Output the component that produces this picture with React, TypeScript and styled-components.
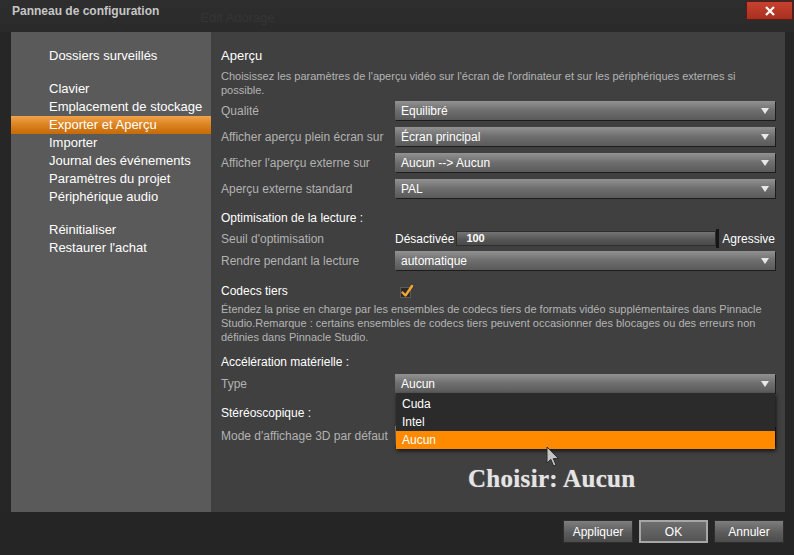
import { FC } from "react";
import styled, { createGlobalStyle } from "styled-components";

const GlobalStyle = createGlobalStyle`
  html, body {
    margin: 0;
    padding: 0;
    background: #262626;
  }
  body {
    font-family: "Liberation Sans", Arial, sans-serif;
  }
`;

const menuGroups: string[][] = [
    ['Dossiers surveillés'],
    ['Clavier', 'Emplacement de stockage', 'Exporter et Aperçu', 'Importer', 'Journal des événements', 'Paramètres du projet', 'Périphérique audio'],
    ['Réinitialiser', "Restaurer l'achat"],
];

const previewRows = [
    { label: 'Qualité', value: 'Equilibré' },
    { label: 'Afficher aperçu plein écran sur', value: 'Écran principal' },
    { label: "Afficher l'aperçu externe sur", value: 'Aucun --> Aucun' },
    { label: 'Aperçu externe standard', value: 'PAL' },
];

const accelOptions = ['Cuda', 'Intel', 'Aucun'];

const Arrow: FC = () => (
    <SArrow width="8" height="6" viewBox="0 0 8 6">
        <path d="M0 0 H8 L4 6 Z" fill="#e8e8e8"/>
    </SArrow>
);

const Select: FC<{ value?: string }> = ({ value }) => (
    <SSelect>
        <span>{ value }</span>
        <Arrow/>
    </SSelect>
);

const CheckBox: FC = () => (
    <svg width="15" height="15" viewBox="0 0 15 15">
        <rect x="1.5" y="3.5" width="10" height="10" fill="#2a2a2a" stroke="#5a5a5a"/>
        <path d="M3.5 8.5 L6.5 11.5 L13 2" fill="none" stroke="#f7a531" strokeWidth="2.4" strokeLinecap="round" strokeLinejoin="round"/>
    </svg>
);

export default function App() {
    return (
        <SWindow>
            <GlobalStyle/>
            <STitleBar>
                <STitle>Panneau de configuration</STitle>
                <SGhost>Edit Adorage</SGhost>
                <SClose>
                    <svg width="12" height="10" viewBox="0 0 12 10">
                        <path d="M2 1 L10 9 M10 1 L2 9" stroke="#fff" strokeWidth="2.2"/>
                    </svg>
                </SClose>
            </STitleBar>

            <SBody>
                <SSidebar>
                    { menuGroups.map((group, gi) => (
                        <SMenuGroup key={ gi }>
                            { group.map((item) => (
                                <SMenuItem key={ item } $active={ item === 'Exporter et Aperçu' }>{ item }</SMenuItem>
                            )) }
                        </SMenuGroup>
                    )) }
                </SSidebar>

                <SMain>
                    <SHeading>Aperçu</SHeading>
                    <SDesc>
                        Choisissez les paramètres de l'aperçu vidéo sur l'écran de l'ordinateur et sur les périphériques externes si<br/>possible.
                    </SDesc>
                    <SRows $gap={ 7 } $top={ 4 }>
                        { previewRows.map((row) => (
                            <SRow key={ row.label }>
                                <SLabel>{ row.label }</SLabel>
                                <Select value={ row.value }/>
                            </SRow>
                        )) }
                    </SRows>

                    <SSection $top={ 12 }>Optimisation de la lecture :</SSection>
                    <SRows $gap={ 3 } $top={ 3 }>
                        <SRow>
                            <SLabel>Seuil d'optimisation</SLabel>
                            <SSlider>
                                <SSliderText>Désactivée</SSliderText>
                                <STrack>100</STrack>
                                <SThumb/>
                                <SSliderText>Agressive</SSliderText>
                            </SSlider>
                        </SRow>
                        <SRow>
                            <SLabel>Rendre pendant la lecture</SLabel>
                            <Select value="automatique"/>
                        </SRow>
                    </SRows>

                    <SCheckRow>
                        <SSection $top={ 0 }>Codecs tiers</SSection>
                        <CheckBox/>
                    </SCheckRow>
                    <SDesc $top={ 3 }>
                        Étendez la prise en charge par les ensembles de codecs tiers de formats vidéo supplémentaires dans Pinnacle<br/>
                        Studio.Remarque : certains ensembles de codecs tiers peuvent occasionner des blocages ou des erreurs non<br/>
                        définies dans Pinnacle Studio.
                    </SDesc>

                    <SSection $top={ 10 }>Accélération matérielle :</SSection>
                    <SRows $gap={ 0 } $top={ 4 }>
                        <SRow>
                            <SLabel>Type</SLabel>
                            <SDropWrap>
                                <Select value="Aucun"/>
                                <SList>
                                    { accelOptions.map((opt) => (
                                        <SOption key={ opt } $selected={ opt === 'Aucun' }>{ opt }</SOption>
                                    )) }
                                </SList>
                            </SDropWrap>
                        </SRow>
                    </SRows>

                    <SSection $top={ 12 }>Stéréoscopique :</SSection>
                    <SRows $gap={ 0 } $top={ 5 }>
                        <SRow>
                            <SLabel>Mode d'affichage 3D par défaut</SLabel>
                            <Select/>
                        </SRow>
                    </SRows>

                    <SCaption>Choisir: Aucun</SCaption>
                </SMain>
            </SBody>

            <SFooter>
                <SButton>Appliquer</SButton>
                <SButton $primary>OK</SButton>
                <SButton>Annuler</SButton>
            </SFooter>

            <SCursor width="14" height="22" viewBox="0 0 14 22">
                <path d="M1 1 L1 17 L4.8 13.4 L7.6 20 L10 19 L7.3 12.6 L12.5 12.6 Z" fill="#c4c4c4" stroke="#2a2a2a" strokeWidth="1"/>
            </SCursor>
        </SWindow>
    );
}

const SWindow = styled.div`
  position: relative;
  width: 794px;
  height: 555px;
  display: grid;
  grid-template-rows: 32px 480px 43px;
  background: #262626;
  overflow: hidden;
`;

const STitleBar = styled.div`
  display: flex;
  align-items: flex-start;
  background: linear-gradient(#2e2e2e, #2a2a2a);
`;

const STitle = styled.div`
  padding: 4px 0 0 12px;
  font-weight: bold;
  font-size: 12px;
  line-height: 14px;
  color: #c6c6c6;
`;

const SGhost = styled.div`
  flex: 1;
  padding: 11px 0 0 41px;
  font-size: 13px;
  line-height: 14px;
  color: #353535;
`;

const SClose = styled.div`
  display: flex;
  align-items: center;
  justify-content: center;
  width: 45px;
  height: 17px;
  margin: 1px 1px 0 0;
  background: linear-gradient(#c8412f, #a8301f);
  border: 1px solid #5c1a12;
`;

const SBody = styled.div`
  display: flex;
  padding: 0 9px 0 11px;
`;

const SSidebar = styled.div`
  width: 200px;
  padding-top: 15px;
  background: #5a5a5a;
  display: flex;
  flex-direction: column;
  gap: 15px;
`;

const SMenuGroup = styled.div`
  display: flex;
  flex-direction: column;
`;

const SMenuItem = styled.div<{ $active?: boolean }>`
  height: 18px;
  padding-left: 38px;
  font-size: 13px;
  line-height: 18px;
  color: #fff;
  background: ${ p => p.$active ? 'linear-gradient(#f2a24a, #d7801c 55%, #c56a08)' : 'transparent' };
`;

const SMain = styled.div`
  flex: 1;
  display: flex;
  flex-direction: column;
  padding: 16px 10px 0 10px;
  background: #404040;
`;

const SHeading = styled.div`
  font-size: 13px;
  line-height: 16px;
  color: #fff;
`;

const SDesc = styled.div<{ $top?: number }>`
  margin-top: ${ p => p.$top ?? 5 }px;
  font-size: 11px;
  line-height: 14px;
  color: #b4b4b4;
`;

const SRows = styled.div<{ $gap: number, $top: number }>`
  display: flex;
  flex-direction: column;
  gap: ${ p => p.$gap }px;
  margin-top: ${ p => p.$top }px;
`;

const SRow = styled.div`
  display: grid;
  grid-template-columns: 174px 1fr;
  align-items: center;
  height: 19px;
`;

const SLabel = styled.div`
  padding-top: 1px;
  font-size: 12px;
  color: #b2b2b2;
  white-space: nowrap;
`;

const SSelect = styled.div`
  display: flex;
  align-items: center;
  justify-content: space-between;
  height: 19px;
  padding: 0 6px 0 6px;
  box-sizing: border-box;
  background: linear-gradient(#929292, #6e6e6e 50%, #5a5a5a);
  box-shadow: 1px 1px 0 #1c1c1c;
  font-size: 12px;
  color: #fff;
`;

const SArrow = styled.svg`
  display: block;
`;

const SSection = styled.div<{ $top: number }>`
  margin-top: ${ p => p.$top }px;
  font-size: 12px;
  line-height: 16px;
  color: #fff;
`;

const SSlider = styled.div`
  display: flex;
  align-items: center;
  height: 19px;
`;

const SSliderText = styled.span`
  padding: 0 2px 0 0;
  font-size: 12px;
  color: #fff;
  white-space: nowrap;
  &:last-child {
    padding: 0 0 0 3px;
  }
`;

const STrack = styled.div`
  flex: 1;
  height: 13px;
  padding-left: 9px;
  background: linear-gradient(#747474, #555 60%, #4a4a4a);
  border: 1px solid #2e2e2e;
  font-size: 11px;
  line-height: 13px;
  font-weight: bold;
  color: #fff;
`;

const SThumb = styled.div`
  width: 3px;
  height: 19px;
  background: #161616;
`;

const SCheckRow = styled.div`
  display: grid;
  grid-template-columns: 178px auto;
  align-items: center;
  justify-content: start;
  margin-top: 13px;
  height: 16px;
`;

const SDropWrap = styled.div`
  position: relative;
`;

const SList = styled.div`
  position: absolute;
  top: 19px;
  left: 1px;
  right: 0;
  padding-top: 2px;
  background: #2b2b2b;
  box-shadow: 1px 2px 4px rgba(0, 0, 0, 0.7);
  z-index: 2;
`;

const SOption = styled.div<{ $selected?: boolean }>`
  height: 18px;
  padding-left: 6px;
  font-size: 12px;
  line-height: 18px;
  color: #fff;
  background: ${ p => p.$selected ? '#ff8a00' : 'transparent' };
`;

const SCaption = styled.div`
  margin: 19px 0 0 247px;
  font-family: "Liberation Serif", "Times New Roman", serif;
  font-weight: bold;
  font-size: 25px;
  line-height: 30px;
  letter-spacing: 0.3px;
  color: #e4e4e4;
  text-shadow: 0 0 1px #9a9a9a;
`;

const SFooter = styled.div`
  display: flex;
  justify-content: flex-end;
  align-items: flex-start;
  gap: 6px;
  padding: 8px 10px 0 0;
  background: #252525;
`;

const SButton = styled.div<{ $primary?: boolean }>`
  display: flex;
  align-items: center;
  justify-content: center;
  width: ${ p => p.$primary ? 69 : 70 }px;
  height: 23px;
  box-sizing: border-box;
  background: ${ p => p.$primary ? 'linear-gradient(#6e6e6e, #555)' : 'linear-gradient(#7e7e7e, #5c5c5c 55%, #4c4c4c)' };
  border: ${ p => p.$primary ? '2px solid #a6a6a6' : '1px solid #2e2e2e' };
  font-size: 12px;
  color: #fff;
`;

const SCursor = styled.svg`
  position: absolute;
  left: 546px;
  top: 446px;
  z-index: 3;
`;
